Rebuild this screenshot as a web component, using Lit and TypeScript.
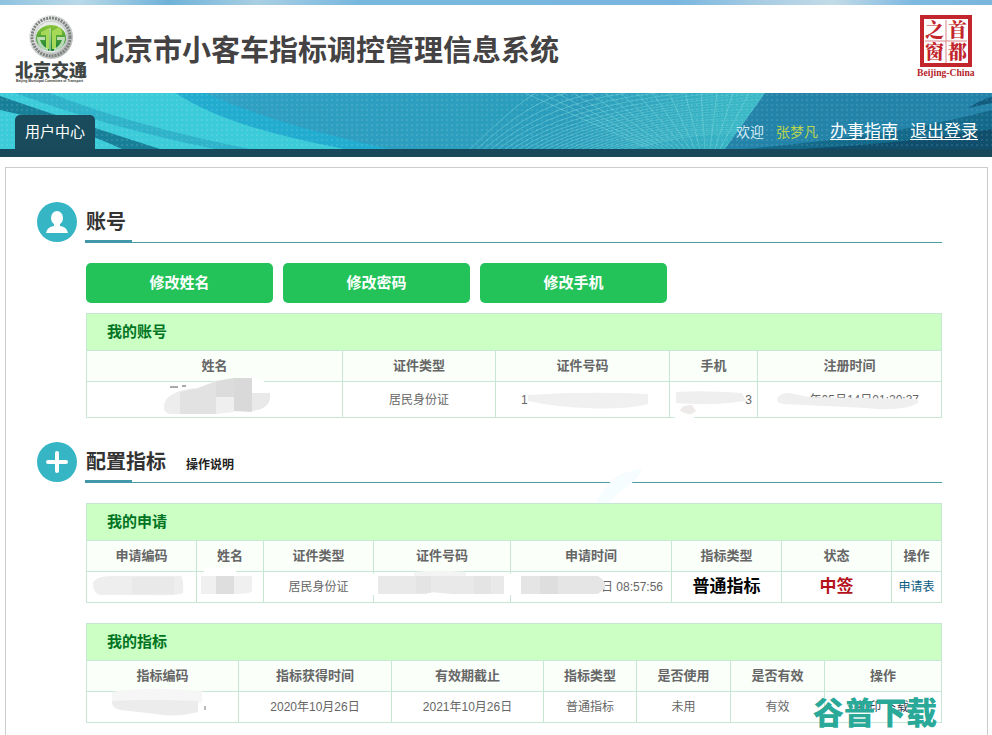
import { LitElement, html, svg, css, nothing } from "lit";
import { customElement, property } from "lit/decorators.js";

type Cell = { text: string; kind?: string; href?: string };
type Column = { label: string; width: number };
type TableData = {
  title: string;
  columns: Column[];
  cells: Cell[];
  tall?: boolean;
};

const account: TableData = {
  title: "我的账号",
  tall: true,
  columns: [
    { label: "姓名", width: 256 },
    { label: "证件类型", width: 153 },
    { label: "证件号码", width: 174 },
    { label: "手机", width: 88 },
    { label: "注册时间", width: 184 },
  ],
  cells: [
    { text: "" },
    { text: "居民身份证" },
    { text: "1", kind: "start" },
    { text: "3", kind: "end" },
    { text: "年05月14日01:20:37", kind: "date" },
  ],
};

const application: TableData = {
  title: "我的申请",
  columns: [
    { label: "申请编码", width: 110 },
    { label: "姓名", width: 67 },
    { label: "证件类型", width: 110 },
    { label: "证件号码", width: 137 },
    { label: "申请时间", width: 161 },
    { label: "指标类型", width: 110 },
    { label: "状态", width: 110 },
    { label: "操作", width: 50 },
  ],
  cells: [
    { text: "" },
    { text: "" },
    { text: "居民身份证" },
    { text: "" },
    { text: "日 08:57:56", kind: "time" },
    { text: "普通指标", kind: "strong" },
    { text: "中签", kind: "won" },
    { text: "申请表", kind: "action", href: "#form" },
  ],
};

const quota: TableData = {
  title: "我的指标",
  columns: [
    { label: "指标编码", width: 152 },
    { label: "指标获得时间", width: 153 },
    { label: "有效期截止", width: 152 },
    { label: "指标类型", width: 93 },
    { label: "是否使用", width: 94 },
    { label: "是否有效", width: 94 },
    { label: "操作", width: 117 },
  ],
  cells: [
    { text: "" },
    { text: "2020年10月26日" },
    { text: "2021年10月26日" },
    { text: "普通指标" },
    { text: "未用" },
    { text: "有效" },
    { text: "打印 下载", kind: "print" },
  ],
};

const accountSmears = svg`
  <path d="M78 84Q82 74 108 71L140 67Q166 62 176 66L184 76L182 96L150 104L80 102Z" fill="#fff"/>
  <path d="M78 92Q80 79 108 75L112 101H84Q77 100 78 92Z" fill="#ededed"/>
  <path d="M94 79L112 75L130 68V101H94Z" fill="#e2e2e2"/>
  <path d="M130 68L148 65V84H130Z" fill="#dcdcdc"/>
  <path d="M130 84H148V99L130 101Z" fill="#efefef"/>
  <path d="M148 65H166V99L148 98Z" fill="#d9d9d9"/>
  <path d="M166 80H184Q186 96 166 98Z" fill="#e9e9e9"/>
  <path d="M84 74h8M96 73h4" stroke="#555" stroke-width="1"/>
  <path d="M442 82Q500 78 562 81V91Q538 97 500 95Q470 94 442 88Z" fill="#f0f0f0"/>
  <path d="M590 79Q618 77 656 80L660 88Q628 93 590 90Z" fill="#efefef"/>
  <path d="M594 98Q596 91 606 92L610 98L604 102Z" fill="#eeeaea"/>
  <path d="M582 108Q590 102 604 101L610 106L592 116Z" fill="#fff"/>
  <path d="M691 86Q694 79 704 80L722 84L832 86V90Q816 99 780 95L697 91Q691 90 691 86Z" fill="#efefef"/>
`;

const applicationSmears = svg`
  <path d="M510 0Q524 -26 538 -30L556 -35Q552 -22 532 -10L524 0Z" fill="#f6fdfe"/>
  <path d="M118 64H150V71H118Z" fill="#fff"/>
  <path d="M7 80Q10 73 26 73H95Q98 76 97 90Q92 93 60 92H14Q7 90 7 80Z" fill="#eee"/>
  <path d="M46 74H88V91H46Z" fill="#e9e9e9"/>
  <path d="M115 73H166V88Q164 91 150 91H115Z" fill="#f0f0f0"/>
  <path d="M130 73H148V91H130Z" fill="#dedede"/>
  <path d="M280 71H510V92H280Z" fill="#fff"/>
  <path d="M328 69Q350 66 380 69V75H328Z" fill="#f4f4f4"/>
  <path d="M292 73H418V91H366L344 89L340 91H292Z" fill="#e9e9e9"/>
  <path d="M330 73H345V90H330ZM388 73H405V91H388Z" fill="#e4e4e4"/>
  <path d="M435 73H512Q522 79 518 86L512 91H435Z" fill="#e5e5e5"/>
  <path d="M454 73H472V91H454Z" fill="#dedede"/>
`;

const quotaSmears = svg`
  <path d="M26 69Q60 63 116 68V80H26Z" fill="#f6f6f6"/>
  <path d="M26 78Q60 76 112 78V89Q90 95 70 91L34 87Q26 86 26 78Z" fill="#ececec"/>
  <path d="M119 83V87" stroke="#777" stroke-width="1"/>
`;

@customElement("data-table")
class DataTable extends LitElement {
  @property({ attribute: false }) data!: TableData;
  @property({ attribute: false }) smears: unknown = nothing;

  static styles = css`
    :host { display: block; position: relative; }
    table {
      width: 100%;
      border-collapse: collapse;
      table-layout: fixed;
      color: #666;
      font-size: 12px;
      line-height: 18px;
    }
    th, td { border: 1px solid #c8e6d4; padding: 0; text-align: center; white-space: nowrap; }
    .title { height: 37px; }
    .title th {
      background: #ccffc4;
      color: #007423;
      font-size: 15px;
      text-align: left;
      padding-left: 20px;
    }
    .labels { height: 31px; background: #fafffa; font-size: 13px; }
    .row { height: 31px; }
    .tall { height: 36px; }
    .start { text-align: left; padding-left: 25px; }
    .end { text-align: right; padding-right: 5px; }
    .time { text-align: right; padding-right: 8px; }
    .date { text-align: right; padding-right: 22px; }
    .strong { color: #000; font-size: 17px; font-weight: 700; }
    .won { color: #b3121b; font-size: 17px; font-weight: 700; }
    .print { color: #345; }
    a { color: #0a5a80; text-decoration: none; }
    svg {
      position: absolute;
      inset: 0;
      width: 100%;
      height: 100%;
      overflow: visible;
      pointer-events: none;
    }
  `;

  render() {
    const { title, columns, cells, tall } = this.data;
    const total = columns.reduce((sum, c) => sum + c.width, 0);
    return html`
      <table>
        <colgroup>
          ${columns.map((c) => html`<col style="width:${(c.width / total) * 100}%" />`)}
        </colgroup>
        <thead>
          <tr class="title"><th colspan=${columns.length}>${title}</th></tr>
          <tr class="labels">${columns.map((c) => html`<th scope="col">${c.label}</th>`)}</tr>
        </thead>
        <tbody>
          <tr class=${tall ? "tall" : "row"}>
            ${cells.map(
              (c) => html`<td class=${c.kind ?? "plain"}>${c.href ? html`<a href=${c.href}>${c.text}</a>` : c.text}</td>`
            )}
          </tr>
        </tbody>
      </table>
      <svg viewBox="0 0 856 ${tall ? 105 : 100}" preserveAspectRatio="none" aria-hidden="true">${this.smears}</svg>
    `;
  }
}

const mesh = Array.from({ length: 24 }, (_, i) => {
  const x = 470 + i * 7;
  const endX = i < 8 ? 536 + i * 30 : 765;
  const endY = i < 8 ? 0 : (i - 8) * 3;
  return svg`<path d="M${x} 56Q${x + 50 + i * 2} ${8 + i} ${endX} ${endY}" />`;
});
const rays = Array.from({ length: 16 }, (_, i) =>
  svg`<path d="M${725 - i * 5} 56L${765 - i * 16} 0" />`
);

@customElement("app-root")
class AppRoot extends LitElement {
  static styles = css`
    :host {
      display: flex;
      flex-direction: column;
      min-height: 100vh;
      background: #fff;
      font-family: "Liberation Sans", "Noto Sans CJK SC", sans-serif;
    }
    .sky {
      height: 5px;
      background: linear-gradient(90deg, #8fc3e0, #b9d9e8 8%, #6fb2d8 17%, #a9cfe3 26%, #79b8de 36%, #78b6df 68%, #a9cde3 77%, #c3dbe8 84%, #7db9e0 92%, #79b6de);
    }
    header {
      display: flex;
      align-items: center;
      height: 88px;
      padding: 0 15px;
    }
    .emblem { width: 72px; height: 68px; flex: none; }
    h1 {
      flex: 1;
      margin: 0 0 0 8px;
      padding-top: 4px;
      color: #444243;
      font-size: 29px;
      font-weight: 700;
      line-height: 40px;
      white-space: nowrap;
    }
    .seal { width: 62px; height: 68px; flex: none; }
    .banner {
      position: relative;
      display: flex;
      align-items: flex-end;
      justify-content: space-between;
      height: 56px;
      padding: 0 14px 0 15px;
      border-bottom: 8px solid #17495a;
      background: #2c9ebd;
    }
    .waves { position: absolute; inset: 0; width: 100%; height: 100%; }
    .tab, .links { position: relative; }
    .tab {
      width: 80px;
      height: 34px;
      border-radius: 5px 5px 0 0;
      background: #194b5c;
      color: #fff;
      font-size: 15px;
      line-height: 34px;
      text-align: center;
      text-decoration: none;
    }
    .links {
      display: flex;
      align-items: baseline;
      gap: 12px;
      height: 34px;
      color: #d3ecf3;
      font-size: 14px;
      line-height: 34px;
    }
    .user { color: #b9d44e; }
    .links a { color: #fff; font-size: 17px; text-underline-offset: 2px; }
    main {
      flex: 1;
      margin: 10px 4px 0 5px;
      padding: 34px 45px 12px 31px;
      border: 1px solid #ccc;
      border-bottom: none;
    }
    section + section { margin-top: 24px; }
    .heading { display: flex; gap: 8px; }
    .icon { width: 40px; height: 40px; flex: none; }
    .rule {
      position: relative;
      flex: 1;
      display: flex;
      align-items: baseline;
      gap: 20px;
      height: 40px;
      border-bottom: 1px solid #4aa0a8;
    }
    .rule::after {
      content: "";
      position: absolute;
      left: 0;
      bottom: -1px;
      width: 47px;
      height: 3px;
      background: #4297a8;
    }
    h2 { margin: 0 0 0 1px; color: #333; font-size: 20px; line-height: 40px; }
    .help { color: #222; font-size: 12px; font-weight: 700; text-decoration: none; }
    .body { display: flex; flex-direction: column; gap: 20px; margin: 20px 0 0 49px; }
    .account { gap: 10px; }
    .buttons { display: flex; gap: 10px; }
    button {
      width: 187px;
      height: 40px;
      border: none;
      border-radius: 5px;
      background: #23c35a;
      color: #fff;
      font: 700 15px/40px "Liberation Sans", "Noto Sans CJK SC", sans-serif;
      padding: 0;
      cursor: pointer;
    }
    .quota { position: relative; }
    .mark {
      position: absolute;
      right: 5px;
      bottom: -9px;
      color: #2aa898;
      font-size: 31px;
      font-weight: 900;
      line-height: 36px;
      white-space: nowrap;
    }
  `;

  private emblem() {
    return svg`
      <svg class="emblem" viewBox="0 0 72 68" aria-label="北京交通" role="img">
        <defs>
          <linearGradient id="g" x1="0" y1="0" x2="0" y2="1">
            <stop offset="0" stop-color="#8cc63a"/><stop offset="1" stop-color="#0b7a34"/>
          </linearGradient>
          <linearGradient id="s" x1="0" y1="0" x2="1" y2="1">
            <stop offset="0" stop-color="#fafafa"/><stop offset="1" stop-color="#a9adab"/>
          </linearGradient>
        </defs>
        <circle cx="36" cy="22" r="22" fill="url(#s)"/>
        <circle cx="36" cy="22" r="19" fill="none" stroke="#7d827f" stroke-width="3" stroke-dasharray="2 1"/>
        <circle cx="36" cy="22" r="16" fill="#e8ece8" stroke="#c6cac7" stroke-width="1"/>
        <ellipse cx="36" cy="23" rx="15" ry="13" fill="url(#g)"/>
        <path d="M26 17L34 13V34H31V20H26ZM37 16L44 12L47 16V20H41V34H37Z" fill="#a6d957"/>
        <path d="M22 22H30V25H25Q27 31 33 34V36Q22 34 22 22ZM50 22H42V25H47Q45 31 39 34V36Q50 34 50 22Z" fill="#e6f2df" opacity=".75"/>
        <path d="M35 13V36" stroke="#eaf7dc" stroke-width="1"/>
        <text x="0" y="62" font-family="Noto Sans CJK SC" font-size="18" font-weight="900" fill="#404643">北京交通</text>
        <text x="1" y="67" font-family="Liberation Sans" font-size="3.4" font-weight="700" fill="#333">Beijing Municipal Committee of Transport</text>
      </svg>`;
  }

  private seal() {
    return svg`
      <svg class="seal" viewBox="0 0 62 68" aria-label="首都之窗" role="img">
        <rect x="7" y="2" width="48" height="48" fill="#fff" stroke="#c2252b" stroke-width="4"/>
        <path d="M31 5V48M10 26H52" stroke="#d9868a" stroke-width="1"/>
        <g font-family="Noto Serif CJK SC, Noto Sans CJK SC" font-size="19" font-weight="900" fill="#c2252b">
          <text x="10" y="22">之</text><text x="33" y="22">首</text>
          <text x="10" y="44">窗</text><text x="33" y="44">都</text>
        </g>
        <text x="2" y="61" font-family="Liberation Serif" font-size="9.6" font-weight="700" fill="#b5242a">Beijing-China</text>
      </svg>`;
  }

  private waves() {
    return svg`
      <svg class="waves" viewBox="0 0 992 56" preserveAspectRatio="none" aria-hidden="true">
        <defs>
          <linearGradient id="sea">
            <stop offset="0" stop-color="#38c6d4"/><stop offset=".25" stop-color="#2f9fc2"/>
            <stop offset=".55" stop-color="#2b9dbc"/><stop offset=".75" stop-color="#2a93b6"/>
            <stop offset="1" stop-color="#1c7298"/>
          </linearGradient>
          <linearGradient id="glow">
            <stop offset="0" stop-color="#3fc3cb" stop-opacity="0"/><stop offset="1" stop-color="#3fc3cb" stop-opacity=".8"/>
          </linearGradient>
          <pattern id="dots" width="5" height="5" patternUnits="userSpaceOnUse">
            <circle cx="2" cy="2" r="1" fill="#fff" opacity=".13"/>
          </pattern>
        </defs>
        <rect width="992" height="56" fill="url(#sea)"/>
        <path d="M0 0H176Q225 30 345 56H0Z" fill="#3ccbd8"/>
        <path d="M0 3Q60 24 160 56H122Q70 32 0 17Z" fill="#187f99"/>
        <path d="M15 0H50Q130 32 250 56H215Q110 35 15 0Z" fill="#2fb3ca"/>
        <path d="M176 0H205Q270 30 390 56H345Q225 34 176 0Z" fill="#22add0"/>
        <g stroke="#7ad5dd" stroke-width="1" fill="none" opacity=".5">${mesh}</g>
        <path d="M600 0H765L725 56H560Z" fill="url(#glow)"/>
        <g stroke="#8fe6e6" stroke-width="1" opacity=".35">${rays}</g>
        <path d="M765 0H992V56H725Z" fill="#2383a9"/>
        <path d="M745 56Q900 42 992 17V56Z" fill="#146a8b"/>
        <path d="M800 56Q900 51 992 36V56Z" fill="#0f4f6d"/>
        <path d="M968 15Q982 6 992 4V10Z" fill="#125c80"/>
        <rect width="992" height="56" fill="url(#dots)"/>
      </svg>`;
  }

  render() {
    return html`
      <div class="sky"></div>
      <header>
        ${this.emblem()}
        <h1>北京市小客车指标调控管理信息系统</h1>
        ${this.seal()}
      </header>
      <nav class="banner">
        ${this.waves()}
        <a class="tab" href="#home">用户中心</a>
        <div class="links">
          <span>欢迎</span><span class="user">张梦凡</span>
          <a href="#guide">办事指南</a><a href="#logout">退出登录</a>
        </div>
      </nav>
      <main>
        <section>
          <div class="heading">
            <svg class="icon" viewBox="0 0 40 40" aria-hidden="true">
              <circle cx="20" cy="20" r="20" fill="#36b6c4"/>
              <ellipse cx="20" cy="16" rx="6" ry="7" fill="#fff"/>
              <path d="M17 20H23V24Q30 25 31 31H9Q10 25 17 24Z" fill="#fff"/>
            </svg>
            <div class="rule"><h2>账号</h2></div>
          </div>
          <div class="body account">
            <div class="buttons">
              <button type="button">修改姓名</button>
              <button type="button">修改密码</button>
              <button type="button">修改手机</button>
            </div>
            <data-table .data=${account} .smears=${accountSmears}></data-table>
          </div>
        </section>
        <section>
          <div class="heading">
            <svg class="icon" viewBox="0 0 40 40" aria-hidden="true">
              <circle cx="20" cy="20" r="20" fill="#36b6c4"/>
              <path d="M20 11V29M11 20H29" stroke="#fff" stroke-width="4" stroke-linecap="round"/>
            </svg>
            <div class="rule"><h2>配置指标</h2><a class="help" href="#help">操作说明</a></div>
          </div>
          <div class="body">
            <data-table .data=${application} .smears=${applicationSmears}></data-table>
            <div class="quota">
              <data-table .data=${quota} .smears=${quotaSmears}></data-table>
              <span class="mark">谷普下载</span>
            </div>
          </div>
        </section>
      </main>
    `;
  }
}
